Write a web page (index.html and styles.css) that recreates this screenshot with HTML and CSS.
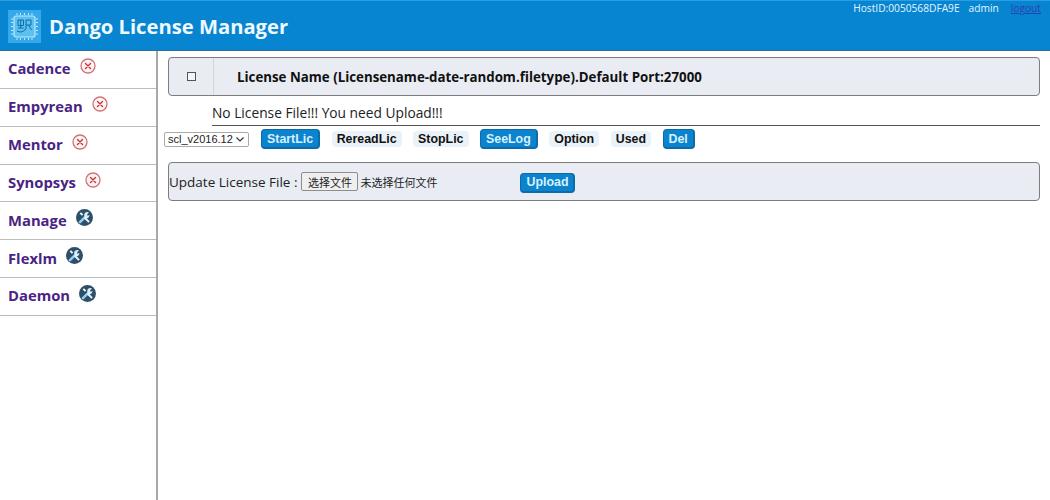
FILE: index.html
```html
<!DOCTYPE html>
<html lang="en">
<head>
<meta charset="utf-8">
<title>Dango License Manager</title>
<link rel="stylesheet" href="styles.css">
</head>
<body>
<header class="topbar">
  <div class="brand">
    <svg class="logo" width="33" height="33" viewBox="0 0 33 33">
      <rect width="33" height="33" fill="#35a9ea"/>
      <rect x="6" y="6" width="21" height="21" rx="2" fill="#5cc0f0" stroke="#bfe9fa" stroke-width="1.200"/>
      <path d="M9 3v2M12.500 3v2M16.500 3v2M20.500 3v2M24 3v2M9 28v2M12.500 28v2M16.500 28v2M20.500 28v2M24 28v2M3 9h2M3 12.500h2M3 16.500h2M3 20.500h2M3 24h2M28 9h2M28 12.500h2M28 16.500h2M28 20.500h2M28 24h2" stroke="#bfe9fa" stroke-width="1"/>
      <path d="M10 10h5.500v5.500h-5.500zM12.700 10v8M10 18h5.500M18 10h5v5h-5M20.500 15l3 5M18 10v9q-3 3-5 3t-4-1" fill="none" stroke="#0d6ea8" stroke-width="1"/>
    </svg>
    <span class="title">Dango License Manager</span>
  </div>
  <div class="userinfo">
    <span>HostID:0050568DFA9E</span>
    <span>admin</span>
    <a class="logout" href="#">logout</a>
  </div>
</header>
<div class="shell">
  <nav class="sidebar">
    <a class="navitem" href="#"><span class="navlabel">Cadence</span><svg class="navicon" width="16" height="16" viewBox="0 0 16 16"><use href="#ico-x"/></svg></a>
    <a class="navitem" href="#"><span class="navlabel">Empyrean</span><svg class="navicon" width="16" height="16" viewBox="0 0 16 16"><use href="#ico-x"/></svg></a>
    <a class="navitem" href="#"><span class="navlabel">Mentor</span><svg class="navicon" width="16" height="16" viewBox="0 0 16 16"><use href="#ico-x"/></svg></a>
    <a class="navitem" href="#"><span class="navlabel">Synopsys</span><svg class="navicon" width="16" height="16" viewBox="0 0 16 16"><use href="#ico-x"/></svg></a>
    <a class="navitem" href="#"><span class="navlabel">Manage</span><svg class="navicon" width="17" height="17" viewBox="0 0 17 17"><use href="#ico-tool"/></svg></a>
    <a class="navitem" href="#"><span class="navlabel">Flexlm</span><svg class="navicon" width="17" height="17" viewBox="0 0 17 17"><use href="#ico-tool"/></svg></a>
    <a class="navitem" href="#"><span class="navlabel">Daemon</span><svg class="navicon" width="17" height="17" viewBox="0 0 17 17"><use href="#ico-tool"/></svg></a>
  </nav>
  <main class="content">
    <div class="panel tablehead">
      <div class="checkcell"><span class="checkbox"></span></div>
      <div class="namecell">License Name (Licensename-date-random.filetype).Default Port:27000</div>
    </div>
    <div class="notice">No License File!!! You need Upload!!!</div>
    <div class="actions">
      <select class="version"><option>scl_v2016.12</option></select>
      <div class="btnrow">
        <button class="btn on">StartLic</button>
        <button class="btn">RereadLic</button>
        <button class="btn">StopLic</button>
        <button class="btn on">SeeLog</button>
        <button class="btn">Option</button>
        <button class="btn">Used</button>
        <button class="btn on">Del</button>
      </div>
    </div>
    <div class="panel upload">
      <span class="uplabel">Update License File :</span>
      <span class="filebtn">选择文件</span>
      <span class="filename">未选择任何文件</span>
      <button class="btn on upbtn">Upload</button>
    </div>
  </main>
</div>
<svg class="defs" width="0" height="0">
  <defs>
    <g id="ico-x">
      <circle cx="8" cy="8" r="7" fill="#fdf3f3" stroke="#cf7478" stroke-width="1.300"/>
      <path d="M5.500 5.500l5 5M10.500 5.500l-5 5" stroke="#c9343c" stroke-width="1.400" stroke-linecap="round"/>
    </g>
    <g id="ico-tool">
      <circle cx="8.500" cy="8.500" r="8.500" fill="#2f4f68"/>
      <path d="M4 13.200l5.800-5.800" stroke="#8fd0ee" stroke-width="2.600" stroke-linecap="round"/>
      <path d="M8.300 7a3.200 3.200 0 0 1 4.700-3.600l-2 2 .7 1.300 1.800-.6a3.200 3.200 0 0 1-4.200 3z" fill="#d5f0fb"/>
      <path d="M4.300 3.800l2.300 2.300M8.500 8.500l4.600 4.700" stroke="#eef8fc" stroke-width="1.900"/>
    </g>
  </defs>
</svg>
</body>
</html>
```
FILE: styles.css
```css
* { box-sizing: border-box; }
html, body { margin: 0; height: 100%; }
body {
  width: 1050px;
  height: 500px;
  overflow: hidden;
  background: #fff;
  color: #111;
  font-family: "Open Sans", "Noto Sans", "Noto Sans CJK SC", sans-serif;
}
.topbar {
  height: 51px;
  background: #0785d1;
  border-top: 1px solid #2a9ee2;
  border-bottom: 1px solid #2c6f9b;
  display: flex;
  justify-content: space-between;
  color: #fff;
}
.brand {
  display: flex;
  align-items: center;
  gap: 8px;
  padding: 8px 0 0 8px;
  height: 42px;
}
.logo { display: block; flex: none; }
.title {
  font-size: 20.200px;
  font-weight: 700;
  color: #eef9ff;
  white-space: nowrap;
  line-height: 33px;
}
.userinfo {
  display: flex;
  gap: 9px;
  padding-right: 9px;
  font-size: 10.200px;
  line-height: 14px;
  color: #e6f5ff;
}
.logout { color: #2a3fb0; text-decoration: underline; margin-left: 3px; }
.shell { display: flex; height: 449px; }
.sidebar {
  width: 158px;
  flex: none;
  border-right: 2px solid #a8a8a8;
}
.navitem {
  display: flex;
  align-items: center;
  height: 37.850px;
  padding: 0 0 0 8px;
  border-bottom: 1px solid #bcbcbc;
  text-decoration: none;
  gap: 9px;
}
.navlabel {
  font-size: 14.800px;
  font-weight: 700;
  color: #4a2384;
  position: relative;
  top: -1px;
}
.navicon { display: block; position: relative; top: -3px; }
.content {
  flex: 1;
  min-width: 0;
  padding: 6px 10px 0 6px;
}
.panel {
  background: #e9ecf3;
  border: 1px solid #7c7c80;
  border-radius: 4px;
  margin-left: 4px;
  height: 39px;
  display: flex;
  align-items: center;
}
.checkcell {
  width: 45px;
  height: 100%;
  flex: none;
  display: flex;
  align-items: center;
  justify-content: center;
  border-right: 1px solid #d4d6dc;
}
.checkbox {
  width: 9px;
  height: 9px;
  border: 1px solid #555;
  background: #f4f5f8;
}
.namecell {
  padding-left: 23px;
  font-size: 13.300px;
  font-weight: 700;
  color: #111;
  white-space: nowrap;
}
.notice {
  margin-left: 48px;
  height: 30px;
  padding-top: 7px;
  font-size: 13.750px;
  line-height: 20px;
  border-bottom: 1px solid #555;
  color: #222;
}
.actions {
  display: flex;
  align-items: center;
  height: 36px;
  padding-bottom: 10px;
}
.version {
  appearance: none;
  width: 85px;
  height: 15px;
  padding: 0 14px 0 3px;
  margin: 0 12px 0 0;
  font-family: "Liberation Sans", sans-serif;
  font-size: 11px;
  line-height: 13px;
  color: #222;
  border: 1px solid #aaa;
  border-radius: 2px;
  background: #fff url("data:image/svg+xml,%3Csvg xmlns='http://www.w3.org/2000/svg' width='8' height='5'%3E%3Cpath d='M.5.500l3.500 3.500 3.500-3.500' fill='none' stroke='%23333' stroke-width='1.200'/%3E%3C/svg%3E") no-repeat right 4px center;
}
.btnrow { display: flex; align-items: center; gap: 11.500px; }
.btn {
  height: 16px;
  padding: 0 5px;
  border: 0;
  border-radius: 4px;
  background: #e9f2f9;
  color: #111;
  font-family: "Liberation Sans", sans-serif;
  font-size: 12.400px;
  font-weight: 700;
  line-height: 16px;
}
.btn.on {
  height: 20px;
  background: #0c84cd;
  color: #d8f1ff;
  border: 1px solid #0a6cab;
  border-bottom-width: 2px;
  border-right-width: 2px;
  padding: 0 5px;
}
.uplabel { font-size: 13.500px; color: #222; white-space: nowrap; margin-right: 4px; }
.filebtn {
  width: 57px;
  height: 19px;
  flex: none;
  display: flex;
  align-items: center;
  justify-content: center;
  background: #efefef;
  border: 1px solid #8d8d8d;
  border-radius: 2px;
  font-size: 11px;
  color: #222;
  margin-right: 2px;
}
.filename { width: 160px; flex: none; font-size: 11px; color: #222; white-space: nowrap; }
.upbtn { flex: none; margin-top: 2px; }
.defs { position: absolute; }
```
